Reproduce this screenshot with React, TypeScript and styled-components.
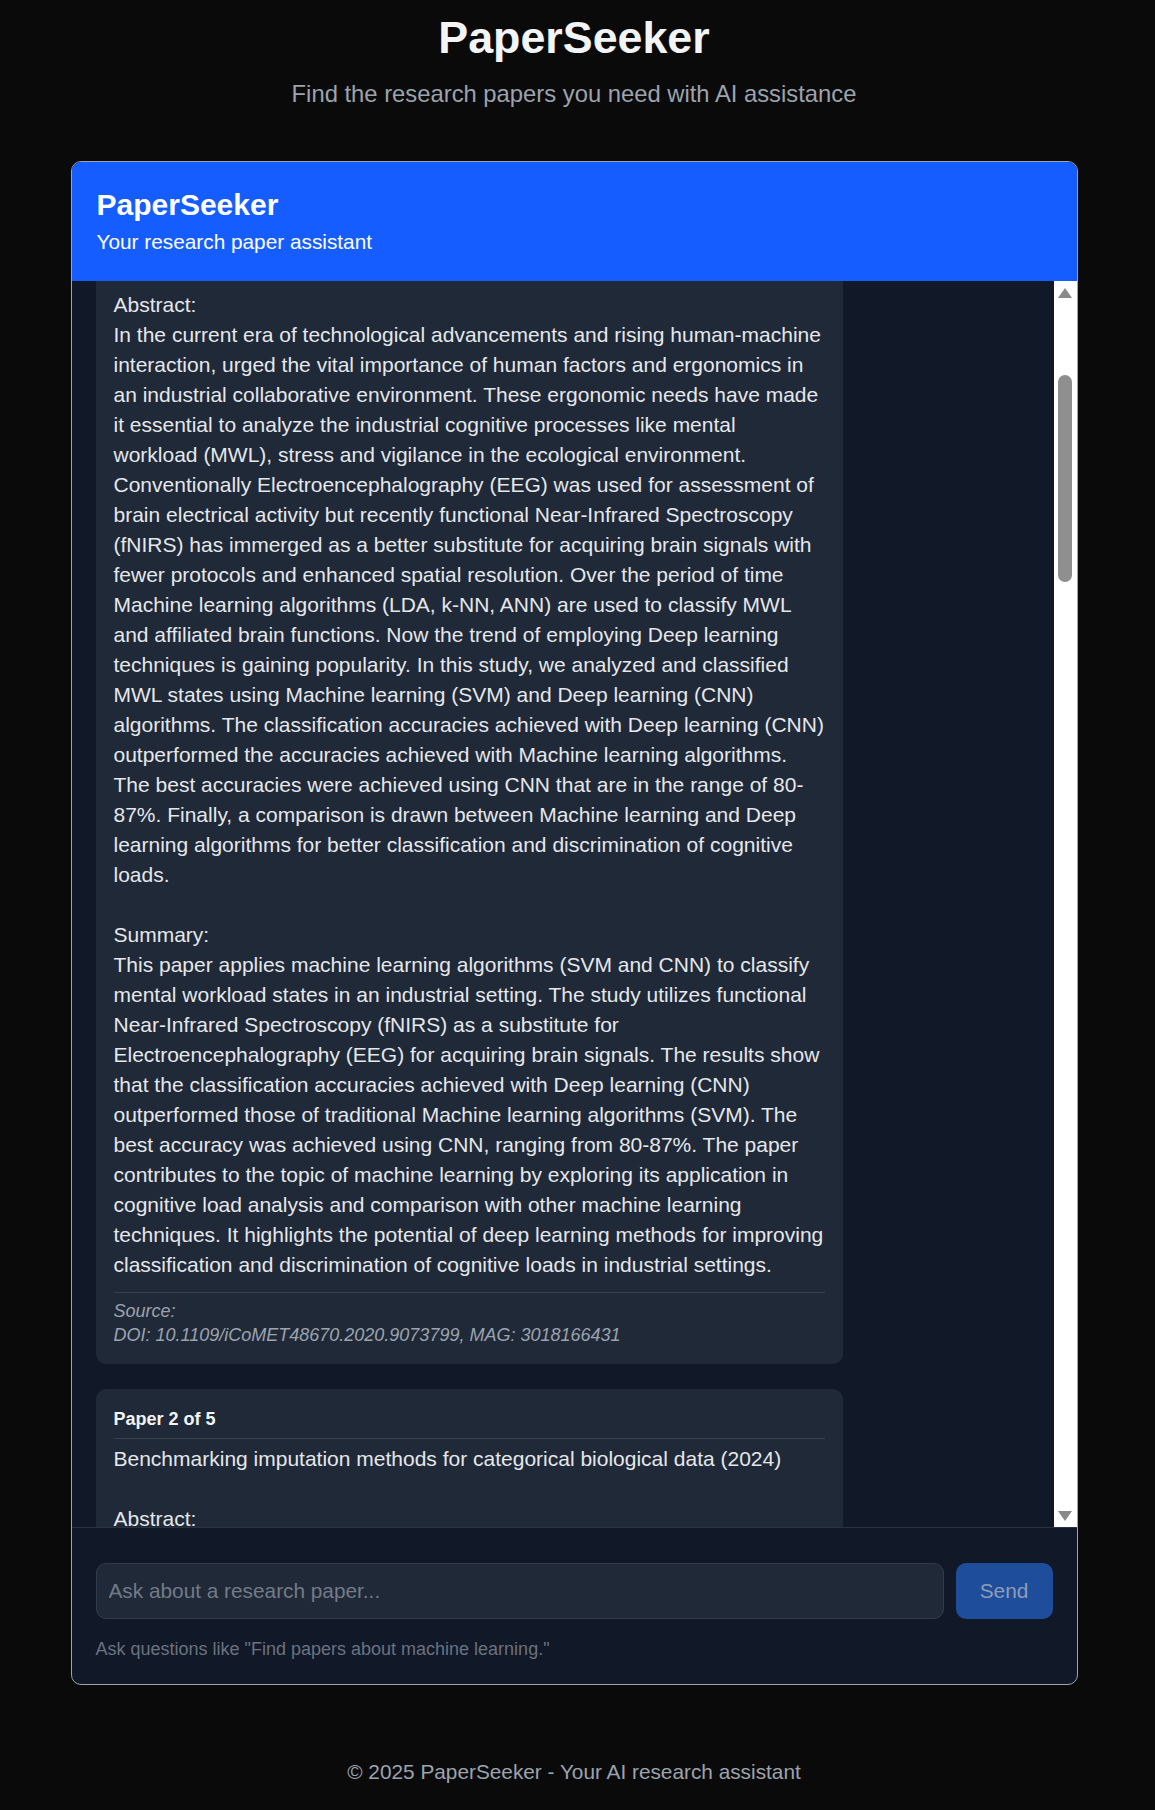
import React, { useCallback, useLayoutEffect, useRef, useState } from "react";
import styled, { createGlobalStyle } from "styled-components";

const GlobalStyle = createGlobalStyle`
  html, body {
    margin: 0;
    padding: 0;
    background: #0a0a0a;
  }
  body {
    font-family: "Liberation Sans", Arial, Helvetica, sans-serif;
  }
  *, *::before, *::after {
    box-sizing: border-box;
  }
`;

const Page = styled.div`
  display: flex;
  flex-direction: column;
  align-items: center;
  padding: 12px 7px 25px 0;
`;

const SiteTitle = styled.h1`
  margin: 0;
  font-size: 44.8px;
  line-height: 51px;
  font-weight: 700;
  color: #f3f4f6;
`;

const SiteSubtitle = styled.p`
  margin: 17px 0 0;
  font-size: 23.8px;
  line-height: 28px;
  color: #9ca3af;
`;

const ChatBox = styled.section`
  margin-top: 52.5px;
  width: 1007px;
  border: 1px solid #9ca3af;
  border-radius: 10px;
  overflow: hidden;
  background: #111827;
  display: flex;
  flex-direction: column;
`;

const ChatHeader = styled.header`
  background: #165dff;
  color: #ffffff;
  padding: 26px 25px 27px;
`;

const ChatTitle = styled.h2`
  margin: 0 0 8px;
  font-size: 30px;
  line-height: 34px;
  font-weight: 700;
`;

const ChatSubtitle = styled.p`
  margin: 0;
  font-size: 20.8px;
  line-height: 24px;
`;

const MessagePane = styled.div`
  display: flex;
  height: 1246px;
`;

const Messages = styled.div`
  flex: 1;
  min-width: 0;
  overflow-y: scroll;
  padding: 24px;
  display: flex;
  flex-direction: column;
  gap: 25px;
  scrollbar-width: none;

  &::-webkit-scrollbar {
    display: none;
  }
`;

const ScrollRail = styled.div`
  width: 23px;
  flex-shrink: 0;
  background: #ffffff;
  display: flex;
  flex-direction: column;
`;

const RailButton = styled.div<{ $dir: "up" | "down" }>`
  height: 23px;
  flex-shrink: 0;
  display: flex;
  justify-content: center;
  align-items: ${(p) => (p.$dir === "up" ? "flex-start" : "flex-end")};
  padding: 7px 1px 6px 0;

  &::before {
    content: "";
    width: 0;
    height: 0;
    border-left: 7.5px solid transparent;
    border-right: 7.5px solid transparent;
    ${(p) =>
      p.$dir === "up"
        ? "border-bottom: 10px solid #8a8a8a;"
        : "border-top: 10px solid #8a8a8a;"}
  }
`;

const RailTrack = styled.div`
  flex: 1;
  position: relative;
`;

const RailThumb = styled.div`
  position: absolute;
  left: 4px;
  right: 5px;
  border-radius: 7px;
  background: #8f8f8f;
`;

const Bubble = styled.div<{ $from: "user" | "bot" }>`
  flex-shrink: 0;
  max-width: 80%;
  align-self: ${(p) => (p.$from === "user" ? "flex-end" : "flex-start")};
  background: ${(p) => (p.$from === "user" ? "#165dff" : "#1f2937")};
  color: ${(p) => (p.$from === "user" ? "#ffffff" : "#e5e7eb")};
  border-radius: 10px;
  padding: 17.5px 18px 17px;
  font-size: 21px;
  line-height: 30px;
  white-space: pre-wrap;
`;

const PaperHeader = styled.div`
  font-size: 18px;
  line-height: 24.3px;
  font-weight: 700;
  color: #f3f4f6;
  padding-bottom: 6.5px;
  border-bottom: 1px solid #374151;
`;

const PaperBody = styled.div`
  margin-top: 5.5px;
  white-space: pre-wrap;
`;

const PaperSource = styled.div`
  margin-top: 12px;
  padding-top: 6px;
  border-top: 1px solid #374151;
  font-size: 18px;
  line-height: 24.3px;
  font-style: italic;
  color: #9ca3af;
  white-space: pre-wrap;
`;

const Composer = styled.div`
  border-top: 1px solid #283242;
  padding: 35px 24px 25px;
`;

const ComposerRow = styled.form`
  display: flex;
  gap: 12px;
  margin: 0;
`;

const QueryInput = styled.input`
  flex: 1;
  height: 56px;
  padding: 0 12px;
  background: #1f2937;
  border: 1px solid #323c4c;
  border-radius: 10px;
  color: #e5e7eb;
  font-family: inherit;
  font-size: 20.8px;
  outline: none;

  &::placeholder {
    color: #737b88;
  }
`;

const SendButton = styled.button`
  width: 97px;
  height: 56px;
  border: none;
  border-radius: 10px;
  background: #1e4d9c;
  color: #8f9db4;
  font-family: inherit;
  font-size: 20.8px;
  cursor: not-allowed;
`;

const Hint = styled.p`
  margin: 20px 0 0;
  font-size: 18px;
  line-height: 20.7px;
  color: #6b7280;
`;

const Footer = styled.footer`
  margin-top: 75px;
  font-size: 20.8px;
  line-height: 24px;
  color: #9ca3af;
`;

type Paper = {
  title: string;
  abstract: string;
  summary: string;
  source: string;
};

const papers: Paper[] = [
  {
    title: "Mental Workload Classification using fNIRS Signals (2020)",
    abstract:
      "In the current era of technological advancements and rising human-machine interaction, urged the vital importance of human factors and ergonomics in an industrial collaborative environment. These ergonomic needs have made it essential to analyze the industrial cognitive processes like mental workload (MWL), stress and vigilance in the ecological environment. Conventionally Electroencephalography (EEG) was used for assessment of brain electrical activity but recently functional Near-Infrared Spectroscopy (fNIRS) has immerged as a better substitute for acquiring brain signals with fewer protocols and enhanced spatial resolution. Over the period of time Machine learning algorithms (LDA, k-NN, ANN) are used to classify MWL and affiliated brain functions. Now the trend of employing Deep learning techniques is gaining popularity. In this study, we analyzed and classified MWL states using Machine learning (SVM) and Deep learning (CNN) algorithms. The classification accuracies achieved with Deep learning (CNN) outperformed the accuracies achieved with Machine learning algorithms. The best accuracies were achieved using CNN that are in the range of 80-87%. Finally, a comparison is drawn between Machine learning and Deep learning algorithms for better classification and discrimination of cognitive loads.",
    summary:
      "This paper applies machine learning algorithms (SVM and CNN) to classify mental workload states in an industrial setting. The study utilizes functional Near-Infrared Spectroscopy (fNIRS) as a substitute for Electroencephalography (EEG) for acquiring brain signals. The results show that the classification accuracies achieved with Deep learning (CNN) outperformed those of traditional Machine learning algorithms (SVM). The best accuracy was achieved using CNN, ranging from 80-87%. The paper contributes to the topic of machine learning by exploring its application in cognitive load analysis and comparison with other machine learning techniques. It highlights the potential of deep learning methods for improving classification and discrimination of cognitive loads in industrial settings.",
    source: "DOI: 10.1109/iCoMET48670.2020.9073799, MAG: 3018166431",
  },
  {
    title: "Benchmarking imputation methods for categorical biological data (2024)",
    abstract:
      "Missing data are a pervasive problem in biological research, where incomplete measurements arise from technical failures, sample degradation, limited detection sensitivity and heterogeneous data collection protocols. Categorical variables, such as genotypes, phenotypic traits, clinical annotations and functional classifications, are particularly challenging because most imputation methods were originally developed for continuous data. In this work, we present a systematic benchmark of imputation strategies for categorical biological data, covering simple baselines (mode imputation, random sampling), statistical approaches (multiple imputation by chained equations, expectation-maximization), nearest-neighbour methods and modern machine learning models including random forests, gradient boosting, variational autoencoders and generative adversarial networks. We evaluated each method on twelve real-world datasets spanning genomics, ecology, microbiology and clinical research, introducing missing values under missing completely at random, missing at random and missing not at random mechanisms at rates between 5% and 50%. Performance was assessed with classification accuracy of imputed entries, preservation of marginal and joint distributions, and the impact on downstream analyses such as clustering and supervised prediction. Our results show that tree-based ensemble methods provide the most reliable performance across datasets and missingness patterns, while deep generative models excel only when large training sets are available. We provide practical recommendations and an open-source benchmarking framework to support reproducible evaluation of future imputation methods.",
    summary:
      "This paper benchmarks a wide range of imputation methods for categorical biological data, comparing simple baselines, statistical techniques and machine learning models such as random forests, gradient boosting, variational autoencoders and GANs. Using twelve datasets from genomics, ecology, microbiology and clinical research, the authors simulate different missingness mechanisms and rates to evaluate how accurately each method restores missing values and how imputation affects downstream analyses. Tree-based ensemble methods emerge as the most robust choice, whereas deep generative models only perform well with large amounts of training data. The study is relevant to machine learning because it shows how learning-based models can be used to handle incomplete data, and it offers practical guidelines and an open-source framework for researchers working with categorical datasets.",
    source: "DOI: 10.1093/bib/bbae123, PubMed: 38567891",
  },
  {
    title: "A Survey of Machine Learning Techniques for Network Intrusion Detection (2022)",
    abstract:
      "With the rapid growth of networked systems and the Internet of Things, cyber attacks have become more frequent, diverse and sophisticated, making intrusion detection a critical component of modern security infrastructures. Traditional signature-based intrusion detection systems are effective against known threats but fail to recognize novel or evolving attacks. Machine learning offers a promising alternative by learning patterns of normal and malicious behaviour directly from network traffic data. This survey provides a comprehensive review of machine learning techniques applied to network intrusion detection, including supervised classifiers such as decision trees, support vector machines, k-nearest neighbours and ensemble methods, unsupervised approaches such as clustering and anomaly detection, and deep learning architectures including convolutional neural networks, recurrent neural networks, autoencoders and transformers. We analyze commonly used benchmark datasets, such as KDD Cup 99, NSL-KDD, UNSW-NB15 and CICIDS2017, and discuss their limitations, including class imbalance, outdated attack types and unrealistic traffic distributions. We further examine feature selection, data preprocessing and evaluation metrics, and compare reported results across studies. Finally, we identify open challenges, including adversarial robustness, explainability, real-time deployment, concept drift and privacy preservation, and outline future research directions for building reliable and practical learning-based intrusion detection systems.",
    summary:
      "This survey reviews how machine learning and deep learning are used to detect network intrusions. It compares supervised, unsupervised and deep learning approaches, from decision trees and SVMs to CNNs, RNNs, autoencoders and transformers, and discusses popular benchmark datasets such as NSL-KDD, UNSW-NB15 and CICIDS2017 along with their weaknesses. The authors highlight the importance of feature selection, preprocessing and appropriate evaluation metrics, and note that many reported results are difficult to compare because of inconsistent experimental setups. The paper concludes that while deep learning models achieve high detection rates, challenges remain in adversarial robustness, interpretability, real-time performance and adapting to changing traffic patterns, making it a useful overview for researchers applying machine learning to cybersecurity.",
    source: "DOI: 10.1109/ACCESS.2022.3151248, MAG: 4210878544",
  },
  {
    title: "Interpretable Machine Learning for Clinical Risk Prediction (2023)",
    abstract:
      "Machine learning models are increasingly used to predict clinical outcomes such as hospital readmission, sepsis onset, mortality and disease progression from electronic health records. Although complex models such as gradient boosted trees and deep neural networks often achieve higher predictive accuracy than traditional scoring systems, their lack of transparency limits clinical adoption, as physicians need to understand and trust the reasoning behind individual predictions. In this study, we investigate the trade-off between accuracy and interpretability in clinical risk prediction. We trained logistic regression, generalized additive models, random forests, gradient boosting machines and recurrent neural networks on a retrospective cohort of more than 120,000 adult inpatient admissions from three hospitals. Model explanations were generated using intrinsic interpretability, SHAP values and attention weights, and were evaluated by a panel of clinicians for plausibility and usefulness. Gradient boosting achieved the highest discrimination, with an area under the receiver operating characteristic curve of 0.86 for 30-day mortality, while generalized additive models reached 0.84 and provided explanations that clinicians rated as significantly more understandable. External validation revealed performance degradation for all models, underlining the need for careful calibration and monitoring. Our findings suggest that interpretable models can offer competitive performance and should be considered as strong baselines in clinical machine learning applications.",
    summary:
      "This paper examines the balance between predictive accuracy and interpretability when machine learning is applied to clinical risk prediction. The authors compare logistic regression, generalized additive models, random forests, gradient boosting and recurrent neural networks on a large multi-hospital dataset of electronic health records. Explanations produced by the models were reviewed by clinicians, who preferred the transparent generalized additive models. Gradient boosting achieved the best accuracy, but interpretable models were only slightly worse, and all models lost performance during external validation. The study contributes to machine learning research by showing that interpretable approaches can be practical and trustworthy alternatives to black-box models in healthcare, and it emphasizes the importance of calibration, validation and clinician involvement.",
    source: "DOI: 10.1038/s41746-023-00812-4, PubMed: 37012345",
  },
  {
    title: "Federated Learning: Challenges, Methods, and Future Directions (2020)",
    abstract:
      "Federated learning involves training statistical models over remote devices or siloed data centers, such as mobile phones or hospitals, while keeping data localized. Training in heterogeneous and potentially massive networks introduces novel challenges that require a fundamental departure from standard approaches for large-scale machine learning, distributed optimization, and privacy-preserving data analysis. In this article, we discuss the unique characteristics and challenges of federated learning, provide a broad overview of current approaches, and outline several directions of future work that are relevant to a wide range of research communities. In particular, we focus on expensive communication, where devices must exchange model updates over slow and unreliable networks, systems heterogeneity, where participating devices differ in storage, computation and connectivity, statistical heterogeneity, where data are non-identically distributed across the network, and privacy concerns, where sharing model updates can still reveal sensitive information. We review methods such as federated averaging, local updating schemes, compression and quantization, asynchronous communication, active device sampling, fault tolerance, personalization, multi-task learning, secure aggregation and differential privacy, and describe the trade-offs between accuracy, efficiency and privacy that arise in practice. We also discuss benchmarks, production deployments and open problems in areas such as fairness, incentive mechanisms and heterogeneity-aware optimization.",
    summary:
      "This paper provides an overview of federated learning, a machine learning paradigm in which models are trained across many devices or institutions without centralizing their data. It describes the core challenges of the field, including expensive communication, heterogeneous hardware, non-identically distributed data and privacy risks, and surveys techniques such as federated averaging, compression, asynchronous updates, personalization, secure aggregation and differential privacy. The authors explain the trade-offs between model accuracy, efficiency and privacy and discuss how federated systems are deployed in production. The paper is a key reference for machine learning research on decentralized and privacy-preserving training, and it outlines open problems such as fairness, incentive design and optimization under heterogeneity that continue to guide future work.",
    source: "DOI: 10.1109/MSP.2020.2975749, arXiv: 1908.07873",
  },
];

export default function App() {
  const listRef = useRef<HTMLDivElement>(null);
  const anchorRef = useRef<HTMLSpanElement>(null);
  const trackRef = useRef<HTMLDivElement>(null);
  const [thumb, setThumb] = useState({ top: 0, height: 0 });

  const updateThumb = useCallback(() => {
    const list = listRef.current;
    const track = trackRef.current;
    if (!list || !track) return;
    const trackH = track.clientHeight;
    const ratio = list.clientHeight / list.scrollHeight;
    const height = Math.max(24, trackH * ratio);
    const maxScroll = list.scrollHeight - list.clientHeight;
    const top = maxScroll > 0 ? (list.scrollTop / maxScroll) * (trackH - height) : 0;
    setThumb({ top, height });
  }, []);

  useLayoutEffect(() => {
    const apply = () => {
      const list = listRef.current;
      const anchor = anchorRef.current;
      if (!list || !anchor) return;
      const delta = anchor.getBoundingClientRect().top - list.getBoundingClientRect().top;
      list.scrollTop = list.scrollTop + delta - 12.5;
      updateThumb();
    };
    apply();
    const id = requestAnimationFrame(apply);
    return () => cancelAnimationFrame(id);
  }, [updateThumb]);

  return (
    <>
      <GlobalStyle />
      <Page>
        <SiteTitle>PaperSeeker</SiteTitle>
        <SiteSubtitle>Find the research papers you need with AI assistance</SiteSubtitle>
        <ChatBox>
          <ChatHeader>
            <ChatTitle>PaperSeeker</ChatTitle>
            <ChatSubtitle>Your research paper assistant</ChatSubtitle>
          </ChatHeader>
          <MessagePane>
            <Messages ref={listRef} onScroll={updateThumb}>
              <Bubble $from="bot">
                Hello! I'm PaperSeeker, your research paper assistant. Ask me to find papers on any
                topic and I'll summarize them for you.
              </Bubble>
              <Bubble $from="user">Find papers about machine learning</Bubble>
              <Bubble $from="bot">I found 5 papers related to machine learning:</Bubble>
              {papers.map((paper, i) => (
                <Bubble $from="bot" key={paper.title}>
                  <PaperHeader>
                    Paper {i + 1} of {papers.length}
                  </PaperHeader>
                  <PaperBody>
                    {`${paper.title}\n\n`}
                    <span ref={i === 0 ? anchorRef : undefined}>Abstract:</span>
                    {`\n${paper.abstract}\n\nSummary:\n${paper.summary}`}
                  </PaperBody>
                  <PaperSource>{`Source:\n${paper.source}`}</PaperSource>
                </Bubble>
              ))}
              <Bubble $from="bot">
                Would you like more details about any of these papers, or should I search for a
                related topic?
              </Bubble>
            </Messages>
            <ScrollRail aria-hidden="true">
              <RailButton $dir="up" />
              <RailTrack ref={trackRef}>
                <RailThumb style={{ top: thumb.top, height: thumb.height }} />
              </RailTrack>
              <RailButton $dir="down" />
            </ScrollRail>
          </MessagePane>
          <Composer>
            <ComposerRow onSubmit={(e) => e.preventDefault()}>
              <QueryInput type="text" placeholder="Ask about a research paper..." />
              <SendButton type="submit" disabled>
                Send
              </SendButton>
            </ComposerRow>
            <Hint>Ask questions like "Find papers about machine learning."</Hint>
          </Composer>
        </ChatBox>
        <Footer>© 2025 PaperSeeker - Your AI research assistant</Footer>
      </Page>
    </>
  );
}
